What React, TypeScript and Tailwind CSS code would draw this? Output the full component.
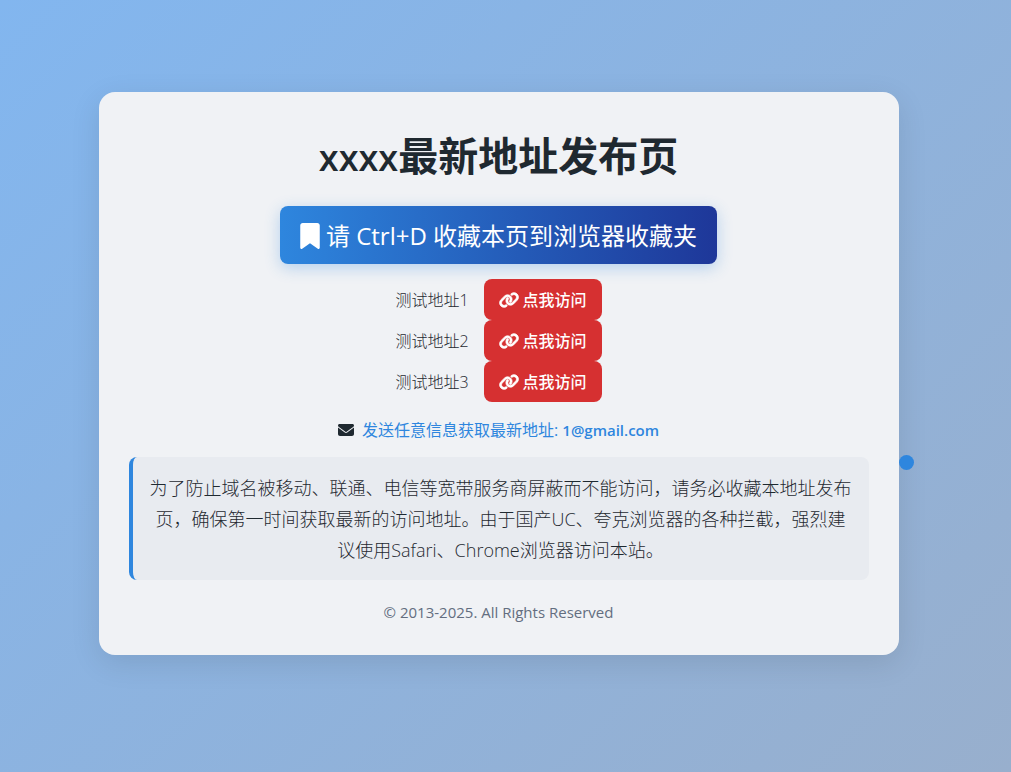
import { FaBookmark, FaEnvelope, FaLink } from "react-icons/fa6";

interface Address {
  label: string;
  href: string;
}

const addresses: Address[] = [
  { label: "测试地址1", href: "#address-1" },
  { label: "测试地址2", href: "#address-2" },
  { label: "测试地址3", href: "#address-3" },
];

export default function App() {
  return (
    <div className="flex min-h-screen items-center justify-center bg-linear-135 from-[#82b6ef] to-[#98afcd] pr-3.5 pb-[26px] font-['Open_Sans','Noto_Sans_CJK_SC',sans-serif] text-[#1f2930]">
      <main className="relative w-full max-w-[800px] rounded-2xl bg-[#f0f2f5] p-[30px] text-center shadow-[0_8px_30px_rgba(0,0,0,0.1)]">
        <h1 className="mb-4 text-[40px] leading-[68px] font-bold">
          <span className="text-4xl font-semibold">xxxx</span>最新地址发布页
        </h1>

        <button
          type="button"
          className="inline-flex items-center gap-1.5 rounded-lg bg-linear-to-r from-[#2e86de] to-[#1e3799] px-5 pt-0.5 text-2xl leading-[56px] text-white shadow-[0_4px_15px_rgba(46,134,222,0.3)]"
        >
          <FaBookmark className="h-[26px] w-5" />
          请 Ctrl+D 收藏本页到浏览器收藏夹
        </button>

        <ul className="mt-[15px]">
          {addresses.map((a) => (
            <li key={a.label} className="flex items-center justify-center gap-[15px] leading-[39px]">
              <span className="pt-0.5 font-light">{a.label}</span>
              <a
                href={a.href}
                className="flex items-center gap-1 rounded-lg bg-[#d63031] px-[15px] pt-0.5 font-medium text-white"
              >
                <FaLink className="h-4 w-5" stroke="currentColor" strokeWidth={24} />
                点我访问
              </a>
            </li>
          ))}
        </ul>

        <p className="mt-[15px] mb-3.5 flex items-center justify-center gap-2 leading-[26px]">
          <FaEnvelope className="size-4" />
          <a href="mailto:1@gmail.com" className="text-[#2e86de]">
            发送任意信息获取最新地址: <span className="text-[15px] font-semibold">1@gmail.com</span>
          </a>
        </p>

        <p className="rounded-lg border-l-4 border-[#2e86de] bg-[#e8ebf0] px-[15px] pt-4 pb-3.5 text-lg leading-[31px] font-light">
          为了防止域名被移动、联通、电信等宽带服务商屏蔽而不能访问，请务必收藏本地址发布页，确保第一时间获取最新的访问地址。由于国产UC、夸克浏览器的各种拦截，强烈建议使用Safari、Chrome浏览器访问本站。
        </p>

        <footer className="mt-5 text-[15px] leading-[25px] text-[#636e80]">
          © 2013-2025. All Rights Reserved
        </footer>

        {/* floating dot on the card's right edge */}
        <span className="absolute top-[363px] left-full size-[15px] rounded-full bg-[#2e86de]" aria-hidden="true" />
      </main>
    </div>
  );
}
